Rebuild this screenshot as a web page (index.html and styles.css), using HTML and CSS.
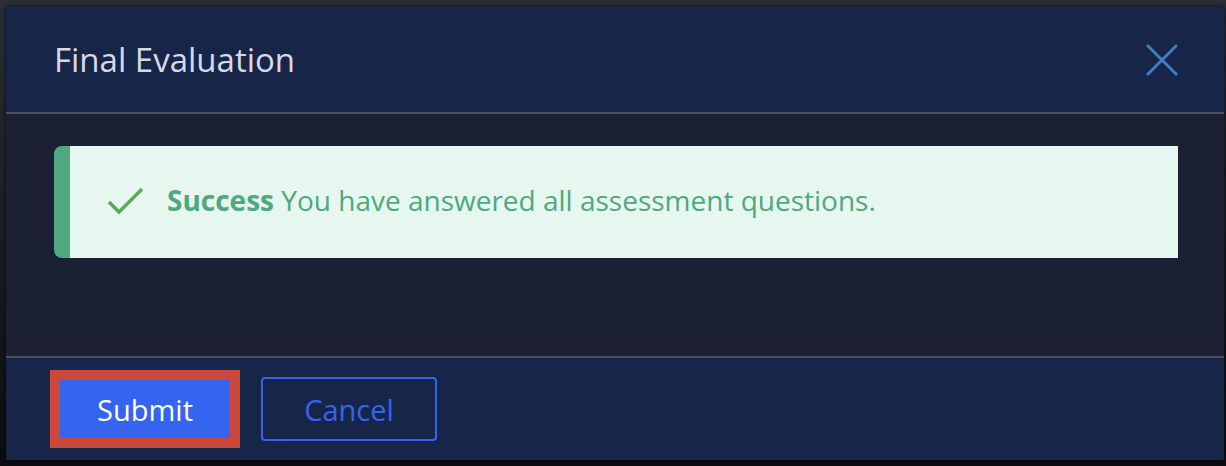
FILE: index.html
```html
<!DOCTYPE html>
<html lang="en">
<head>
    <meta charset="UTF-8">
    <meta name="viewport" content="width=device-width, initial-scale=1.0">
    <title>Final Evaluation</title>
    <link rel="stylesheet" href="styles.css">
</head>
<body>
    <div class="frame">
        <div class="dialog">
            <!-- Header -->
            <div class="dialog-header">
                <h2>Final Evaluation</h2>
                <button class="close-btn" aria-label="Close">
                    <svg width="32" height="32" viewBox="0 0 32 32">
                        <path d="M2 2 L30 30 M30 2 L2 30" stroke="#3f7fc2" stroke-width="3" stroke-linecap="round" fill="none"/>
                    </svg>
                </button>
            </div>

            <!-- Body -->
            <div class="dialog-body">
                <div class="alert">
                    <svg class="alert-icon" width="38" height="28" viewBox="0 0 38 28">
                        <path d="M2 15 L12 25 L35 2" stroke="#5ba85c" stroke-width="3.4" fill="none"/>
                    </svg>
                    <p><strong>Success</strong> You have answered all assessment questions.</p>
                </div>
            </div>

            <!-- Footer -->
            <div class="dialog-footer">
                <button class="btn btn-primary">Submit</button>
                <button class="btn btn-outline">Cancel</button>
            </div>
        </div>
    </div>
</body>
</html>
```

FILE: styles.css
```css
/* Global Styling */
body {
    font-family: 'Open Sans', 'Noto Sans', sans-serif;
    background-color: #000;
    margin: 0;
    padding: 0;
}

.frame {
    height: 466px;
    box-sizing: border-box;
    padding: 7px 2px 6px 6px;
    background: linear-gradient(to bottom, #2a2e36, #0c0d10);
}

.dialog {
    height: 100%;
    display: flex;
    flex-direction: column;
    background-color: #1c2035;
    box-shadow: 0 0 4px rgba(0, 0, 0, 0.8);
}

/* Header */
.dialog-header {
    height: 105px;
    display: flex;
    align-items: center;
    justify-content: space-between;
    padding: 0 46px 0 48px;
    background-color: #172549;
    border-bottom: 2px solid #4d4f5f;
}

.dialog-header h2 {
    margin: 0;
    font-size: 33px;
    font-weight: 500;
    color: #d6d9e6;
}

.close-btn {
    background: none;
    border: none;
    padding: 0;
    display: flex;
    cursor: pointer;
}

/* Body */
.dialog-body {
    flex: 1;
    padding: 32px 46px 0 48px;
}

.alert {
    height: 112px;
    display: flex;
    align-items: center;
    gap: 22px;
    padding-left: 37px;
    background-color: #e6f7ef;
    border-left: 16px solid #4fa87e;
    border-radius: 8px 0 0 8px;
}

.alert-icon {
    margin-bottom: 2px;
}

.alert p {
    margin: 0 0 4px;
    font-size: 28px;
    color: #4fa87e;
}

.alert strong {
    font-weight: 700;
}

/* Footer */
.dialog-footer {
    height: 104px;
    box-sizing: border-box;
    display: flex;
    align-items: center;
    gap: 28px;
    padding: 0 0 0 51px;
    background-color: #172549;
    border-top: 2px solid #4d4f5f;
}

.btn {
    width: 176px;
    height: 64px;
    font-family: inherit;
    font-size: 29px;
    font-weight: 500;
    border-radius: 4px;
    cursor: pointer;
}

.btn-primary {
    background-color: #3564ee;
    border: 2px solid #3564ee;
    border-radius: 0;
    color: #fff;
    outline: 10px solid #cc483b;
    outline-offset: -3px;
}

.btn-outline {
    background-color: transparent;
    border: 2px solid #3564ee;
    color: #3564ee;
}
```
